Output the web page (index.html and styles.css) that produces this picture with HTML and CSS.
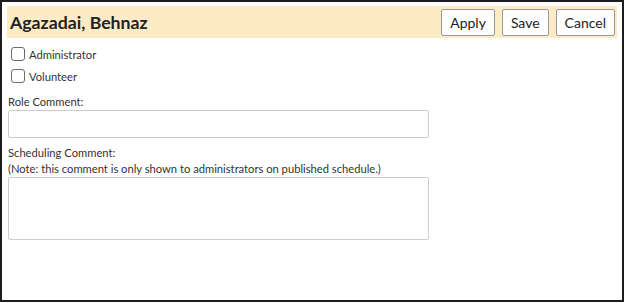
FILE: index.html
```html
<!DOCTYPE html>
<html lang="en">
<head>
    <meta charset="UTF-8">
    <title>Edit Roles</title>
    <link rel="stylesheet" href="styles.css">
</head>
<body>
    <div class="frame">
        <div class="header">
            <h1>Agazadai, Behnaz</h1>
            <div class="actions">
                <button type="button">Apply</button>
                <button type="button">Save</button>
                <button type="button">Cancel</button>
            </div>
        </div>

        <!-- role checkboxes -->
        <div class="roles">
            <label class="role"><input type="checkbox"> Administrator</label>
            <label class="role"><input type="checkbox"> Volunteer</label>
        </div>

        <div class="field">
            <label for="roleComment">Role Comment:</label>
            <input type="text" id="roleComment">
        </div>

        <div class="field">
            <label for="schedComment">Scheduling Comment:<br>(Note: this comment is only shown to administrators on published schedule.)</label>
            <textarea id="schedComment"></textarea>
        </div>
    </div>
</body>
</html>
```

FILE: styles.css
```css
body {
    margin: 0;
    font-family: Lato, "Open Sans", sans-serif;
    font-size: 11.2px;
    color: #333;
    background-color: #fff;
}

.frame {
    box-sizing: border-box;
    width: 624px;
    height: 302px;
    border: 2px solid #1c1c1c;
    padding: 4px 5px 0 5px;
}

.header {
    display: flex;
    align-items: center;
    justify-content: space-between;
    height: 32px;
    padding: 0 2px 0 3px;
    background-color: #fdebc6;
}

h1 {
    margin: 0;
    font-size: 17.7px;
    font-weight: 700;
    color: #222;
}

.actions {
    display: flex;
    gap: 7px;
}

button {
    height: 27px;
    padding: 0 8px;
    font-family: inherit;
    font-size: 14px;
    color: #222;
    background-color: #fff;
    border: 1px solid #999;
    border-radius: 2px;
}

.roles {
    padding: 5px 0 0 4px;
}

.role {
    display: flex;
    align-items: center;
    height: 22px;
    gap: 4px;
}

.role input {
    appearance: none;
    width: 14px;
    height: 14px;
    margin: 0;
    border: 1px solid #6b6b6b;
    border-radius: 3px;
    background-color: #fff;
}

.field {
    margin-top: 7px;
    padding-left: 1px;
}

.field label {
    display: block;
    line-height: 16px;
    margin-bottom: 0;
}

input[type="text"], textarea {
    display: block;
    box-sizing: border-box;
    width: 421px;
    border: 1px solid #ccc;
    border-radius: 2px;
    margin: 0;
}

input[type="text"] {
    height: 28px;
}

textarea {
    height: 63px;
    resize: none;
}
```
